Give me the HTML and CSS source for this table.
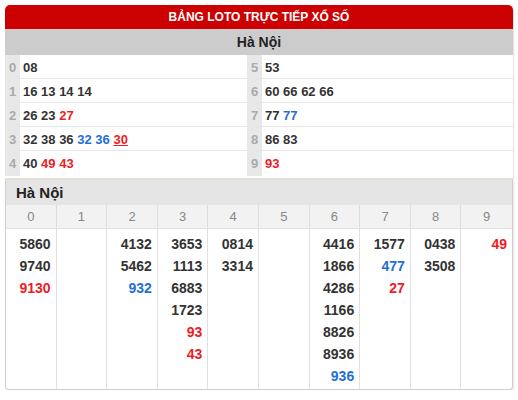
FILE: index.html
```html
<!DOCTYPE html>
<html lang="vi">
<head>
<meta charset="utf-8">
<link rel="stylesheet" href="styles.css">
</head>
<body>
<div class="loto">
  <div class="loto-title">BẢNG LOTO TRỰC TIẾP XỔ SỐ</div>
  <div class="loto-sub">Hà Nội</div>
  <div class="loto-grid">
    <div class="lrow"><span class="dg">0</span><span class="nums">08</span></div>
    <div class="lrow right"><span class="dg">5</span><span class="nums">53</span></div>
    <div class="lrow"><span class="dg">1</span><span class="nums">16 13 14 14</span></div>
    <div class="lrow right"><span class="dg">6</span><span class="nums">60 66 62 66</span></div>
    <div class="lrow"><span class="dg">2</span><span class="nums">26 23 <span class="red">27</span></span></div>
    <div class="lrow right"><span class="dg">7</span><span class="nums">77 <span class="blue">77</span></span></div>
    <div class="lrow"><span class="dg">3</span><span class="nums">32 38 36 <span class="blue">32</span> <span class="blue">36</span> <span class="red ul">30</span></span></div>
    <div class="lrow right"><span class="dg">8</span><span class="nums">86 83</span></div>
    <div class="lrow last"><span class="dg">4</span><span class="nums">40 <span class="red">49</span> <span class="red">43</span></span></div>
    <div class="lrow right last"><span class="dg">9</span><span class="nums"><span class="red">93</span></span></div>
  </div>
</div>

<div class="dau">
  <div class="dau-title">Hà Nội</div>
  <div class="dau-grid">
    <div class="hd">0</div><div class="hd">1</div><div class="hd">2</div><div class="hd">3</div><div class="hd">4</div>
    <div class="hd">5</div><div class="hd">6</div><div class="hd">7</div><div class="hd">8</div><div class="hd">9</div>
    <div class="col"><div>5860</div><div>9740</div><div class="red">9130</div></div>
    <div class="col"></div>
    <div class="col"><div>4132</div><div>5462</div><div class="blue">932</div></div>
    <div class="col"><div>3653</div><div>1113</div><div>6883</div><div>1723</div><div class="red">93</div><div class="red">43</div></div>
    <div class="col"><div>0814</div><div>3314</div></div>
    <div class="col"></div>
    <div class="col"><div>4416</div><div>1866</div><div>4286</div><div>1166</div><div>8826</div><div>8936</div><div class="blue">936</div></div>
    <div class="col"><div>1577</div><div class="blue">477</div><div class="red">27</div></div>
    <div class="col"><div>0438</div><div>3508</div></div>
    <div class="col last"><div class="red">49</div></div>
  </div>
</div>
</body>
</html>
```

FILE: styles.css
```css
* { box-sizing: border-box; }
body {
  margin: 0;
  padding: 5px 5px 0 5px;
  background: #fff;
  font-family: "Liberation Sans", Arial, sans-serif;
  color: #333;
}
.red { color: #ee1c25; }
.blue { color: #1f6fd6; }
.ul { text-decoration: underline; }

.loto {
  width: 508px;
  border-radius: 5px 5px 0 0;
  overflow: hidden;
  border-bottom: 2px solid #e4e0d6;
  box-shadow: 1px 0 1px rgba(0,0,0,0.12);
}
.loto-title {
  height: 24px;
  line-height: 24px;
  background: #cc0000;
  color: #fff;
  font-weight: bold;
  font-size: 12px;
  text-align: center;
}
.loto-sub {
  height: 26px;
  line-height: 27px;
  background: #cccccc;
  color: #222;
  font-weight: bold;
  font-size: 14px;
  text-align: center;
}
.loto-grid {
  display: grid;
  grid-template-columns: 242px 1fr;
  background: #fff;
  padding-bottom: 2px;
}
.lrow {
  display: flex;
  height: 24px;
  border-bottom: 1px solid #e6e6e6;
}
.lrow.last { border-bottom: 0; height: 25px; }
.dg {
  width: 15px;
  background: #e8e8e8;
  color: #aaa;
  font-weight: bold;
  font-size: 13px;
  line-height: 25px;
  text-align: center;
}
.nums {
  padding-left: 3px;
  font-weight: bold;
  font-size: 13px;
  line-height: 25px;
  color: #333;
}

.dau {
  width: 508px;
  border: 1px solid #cfcfcf;
  border-top: 0;
  border-radius: 0 0 4px 4px;
  overflow: hidden;
  box-shadow: 1px 1px 2px rgba(0,0,0,0.12);
}
.dau-title {
  height: 25px;
  line-height: 26px;
  background: #e5e5e5;
  padding-left: 10px;
  font-weight: bold;
  font-size: 15px;
  color: #222;
}
.dau-grid {
  display: grid;
  grid-template-columns: repeat(10, 1fr);
}
.hd {
  height: 24px;
  line-height: 24px;
  background: #f2f2f2;
  color: #888;
  font-size: 13px;
  text-align: center;
  border-right: 1px solid #dddddd;
  border-bottom: 1px solid #e2e2e2;
}
.hd:nth-child(10) { border-right: 0; }
.col {
  border-right: 1px solid #e0e0e0;
  padding: 4px 5px 2px 0;
  text-align: right;
  font-weight: bold;
  font-size: 14px;
  line-height: 22px;
  color: #333;
  min-height: 160px;
}
.col.last { border-right: 0; }
```
